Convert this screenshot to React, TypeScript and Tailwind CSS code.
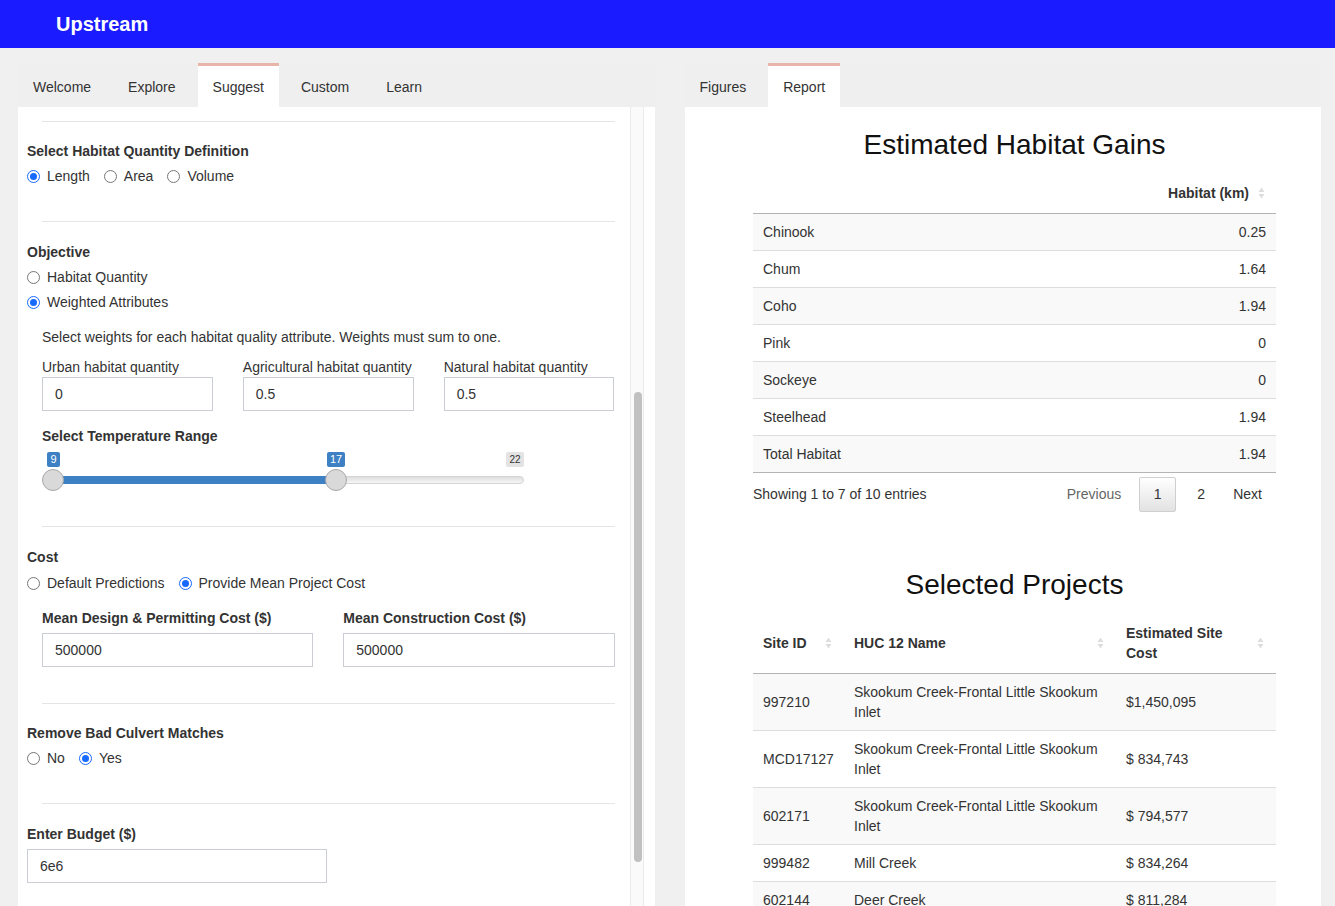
import React from 'react';

const habitatRows = [
  { label: 'Chinook', value: '0.25' },
  { label: 'Chum', value: '1.64' },
  { label: 'Coho', value: '1.94' },
  { label: 'Pink', value: '0' },
  { label: 'Sockeye', value: '0' },
  { label: 'Steelhead', value: '1.94' },
  { label: 'Total Habitat', value: '1.94' },
];

const projects = [
  { id: '997210', name: 'Skookum Creek-Frontal Little Skookum Inlet', cost: '$1,450,095' },
  { id: 'MCD17127', name: 'Skookum Creek-Frontal Little Skookum Inlet', cost: '$ 834,743' },
  { id: '602171', name: 'Skookum Creek-Frontal Little Skookum Inlet', cost: '$ 794,577' },
  { id: '999482', name: 'Mill Creek', cost: '$ 834,264' },
  { id: '602144', name: 'Deer Creek', cost: '$ 811,284' },
];

function Radio({ checked = false }: { checked?: boolean }) {
  if (checked) {
    return (
      <span className="flex h-[13px] w-[13px] shrink-0 items-center justify-center rounded-full border-[1.5px] border-[#1769ff] bg-white">
        <span className="h-[7px] w-[7px] rounded-full bg-[#1769ff]" />
      </span>
    );
  }
  return <span className="h-[13px] w-[13px] shrink-0 rounded-full border border-[#767676] bg-white" />;
}

function RadioOption({ label, checked }: { label: string; checked?: boolean }) {
  return (
    <div className="flex h-[20px] items-center gap-[7px]">
      <Radio checked={checked} />
      <span>{label}</span>
    </div>
  );
}

function Hr({ className }: { className: string }) {
  return <div className={`mx-[15px] border-t border-[#e5e5e5] ${className}`} />;
}

function Label({ children, className }: { children: React.ReactNode; className: string }) {
  return <div className={`font-bold leading-[20px] ${className}`}>{children}</div>;
}

function TextBox({ value, className = '' }: { value: string; className?: string }) {
  return (
    <div className={`flex h-[34px] items-center border border-[#cacdd4] bg-white px-[12px] text-[#333] ${className}`}>
      {value}
    </div>
  );
}

function SortIcon() {
  return (
    <svg width="7" height="14" viewBox="0 0 7 14" className="shrink-0">
      <path d="M0.5 6 L3.5 1.5 L6.5 6 Z" fill="#dedede" />
      <path d="M0.5 8 L3.5 12.5 L6.5 8 Z" fill="#dedede" />
    </svg>
  );
}

function Tab({ label, active }: { label: string; active?: boolean }) {
  return (
    <div
      className={`flex h-[44px] items-center border-t-[3px] px-[15px] pt-[2px] text-[#333] ${
        active ? 'border-[#e8b5a8] bg-white' : 'border-transparent'
      }`}
    >
      {label}
    </div>
  );
}

function TempSlider() {
  return (
    <div className="relative h-[50px] w-[482px]">
      <div className="absolute left-[4px] top-[30px] h-[8px] w-[478px] rounded-full border border-[#d4d4d4] bg-gradient-to-b from-[#dedede] to-[#f6f6f6]" />
      <div className="absolute left-[11px] top-[30px] h-[8px] w-[283px] bg-[#3d80c3]" />
      <div className="absolute left-[0px] top-[23px] h-[22px] w-[22px] rounded-full border border-[#a9a9a9] bg-[#d9d9d9]" />
      <div className="absolute left-[283px] top-[23px] h-[22px] w-[22px] rounded-full border border-[#a9a9a9] bg-[#d9d9d9]" />
      <div className="absolute left-[5px] top-[6px] flex h-[15px] w-[13px] items-center justify-center rounded-[2px] bg-[#3d80c3] text-[11px] text-white">
        9
      </div>
      <div className="absolute left-[285px] top-[6px] flex h-[15px] w-[18px] items-center justify-center rounded-[2px] bg-[#3d80c3] text-[11px] text-white">
        17
      </div>
      <div className="absolute left-[464px] top-[6px] flex h-[15px] w-[18px] items-center justify-center rounded-[2px] bg-[#e3e3e3] text-[10px] text-[#333]">
        22
      </div>
    </div>
  );
}

function LeftPanel() {
  return (
    <div className="flex flex-col">
      <div className="flex h-[44px] gap-[7px] rounded-t-[4px] bg-[#efefef]">
        <Tab label="Welcome" />
        <Tab label="Explore" />
        <Tab label="Suggest" active />
        <Tab label="Custom" />
        <Tab label="Learn" />
      </div>
      <div className="flex h-[799px] bg-white">
        <div className="h-full flex-1 overflow-hidden pl-[9px]">
          <Hr className="mt-[14px]" />
          <Label className="mt-[19px]">Select Habitat Quantity Definition</Label>
          <div className="mt-[5px] flex gap-[14px]">
            <RadioOption label="Length" checked />
            <RadioOption label="Area" />
            <RadioOption label="Volume" />
          </div>
          <Hr className="mt-[35px]" />
          <Label className="mt-[20px]">Objective</Label>
          <div className="mt-[5px]">
            <RadioOption label="Habitat Quantity" />
          </div>
          <div className="mt-[5px]">
            <RadioOption label="Weighted Attributes" checked />
          </div>
          <div className="px-[15px]">
            <p className="mt-[15px] leading-[20px]">Select weights for each habitat quality attribute. Weights must sum to one.</p>
            <div className="mt-[10px] grid grid-cols-3 gap-[30px]">
              <div>
                <div className="leading-[20px]">Urban habitat quantity</div>
                <TextBox value="0" />
              </div>
              <div>
                <div className="leading-[20px]">Agricultural habitat quantity</div>
                <TextBox value="0.5" />
              </div>
              <div>
                <div className="leading-[20px]">Natural habitat quantity</div>
                <TextBox value="0.5" />
              </div>
            </div>
            <Label className="mt-[15px]">Select Temperature Range</Label>
            <TempSlider />
          </div>
          <Hr className="mt-[30px]" />
          <Label className="mt-[20px]">Cost</Label>
          <div className="mt-[6px] flex gap-[14px]">
            <RadioOption label="Default Predictions" />
            <RadioOption label="Provide Mean Project Cost" checked />
          </div>
          <div className="mt-[15px] grid grid-cols-2 gap-[30px] px-[15px]">
            <div>
              <div className="font-bold leading-[20px]">Mean Design &amp; Permitting Cost ($)</div>
              <TextBox value="500000" className="mt-[5px]" />
            </div>
            <div>
              <div className="font-bold leading-[20px]">Mean Construction Cost ($)</div>
              <TextBox value="500000" className="mt-[5px]" />
            </div>
          </div>
          <Hr className="mt-[36px]" />
          <Label className="mt-[19px]">Remove Bad Culvert Matches</Label>
          <div className="mt-[5px] flex gap-[14px]">
            <RadioOption label="No" />
            <RadioOption label="Yes" checked />
          </div>
          <Hr className="mt-[35px]" />
          <Label className="mt-[20px]">Enter Budget ($)</Label>
          <TextBox value="6e6" className="mt-[5px] w-[300px]" />
        </div>
        <div className="h-full w-[14px] border-x border-[#ebebeb] bg-[#fafafa] px-[3px] pt-[285px]">
          <div className="h-[470px] w-[8px] rounded-full bg-[#c1c1c1]" />
        </div>
        <div className="w-[11px]" />
      </div>
    </div>
  );
}

function RightPanel() {
  return (
    <div className="flex flex-col">
      <div className="flex h-[44px] gap-[7px] rounded-t-[4px] bg-[#efefef]">
        <Tab label="Figures" />
        <Tab label="Report" active />
      </div>
      <div className="h-[799px] overflow-hidden bg-white pl-[68.5px] pr-[45px] pt-[20px] text-[#333]">
        <h2 className="text-center text-[28px] leading-[36px] text-[#111]">Estimated Habitat Gains</h2>
        <table className="mt-[10px] w-full border-collapse">
          <thead>
            <tr>
              <th className="border-b border-[#b4b4b4] px-[10px] py-[10px]" />
              <th className="border-b border-[#b4b4b4] py-[10px] pl-[10px] pr-[11px]">
                <div className="flex items-center justify-end gap-[9px] font-bold leading-[20px]">
                  <span>Habitat (km)</span>
                  <SortIcon />
                </div>
              </th>
            </tr>
          </thead>
          <tbody>
            {habitatRows.map((row, i) => (
              <tr key={row.label} className={i % 2 === 0 ? 'bg-[#f9f9f9]' : 'bg-white'}>
                <td
                  className={`border-t border-[#dddddd] px-[10px] py-[8px] text-left leading-[20px] ${
                    i === habitatRows.length - 1 ? 'border-b border-b-[#b4b4b4]' : ''
                  }`}
                >
                  {row.label}
                </td>
                <td
                  className={`border-t border-[#dddddd] px-[10px] py-[8px] text-right leading-[20px] ${
                    i === habitatRows.length - 1 ? 'border-b border-b-[#b4b4b4]' : ''
                  }`}
                >
                  {row.value}
                </td>
              </tr>
            ))}
          </tbody>
        </table>
        <div className="mt-[4px] flex h-[35px] items-center justify-between">
          <span>Showing 1 to 7 of 10 entries</span>
          <div className="flex h-[35px] items-center">
            <span className="px-[14px] text-[#666]">Previous</span>
            <span className="ml-[4px] flex h-[35px] w-[37px] items-center justify-center rounded-[2px] border border-[#cfcfcf] bg-gradient-to-b from-white to-[#e2e2e2]">
              1
            </span>
            <span className="ml-[7px] flex w-[36px] justify-center">2</span>
            <span className="px-[14px]">Next</span>
          </div>
        </div>
        <h2 className="mt-[55px] text-center text-[28px] leading-[36px] text-[#111]">Selected Projects</h2>
        <table className="mt-[10px] w-full table-fixed border-collapse">
          <colgroup>
            <col className="w-[91px]" />
            <col className="w-[272px]" />
            <col className="w-[160px]" />
          </colgroup>
          <thead>
            <tr>
              {['Site ID', 'HUC 12 Name', 'Estimated Site Cost'].map((h) => (
                <th key={h} className="border-b border-[#b4b4b4] py-[10px] pl-[10px] pr-[12px] text-left align-middle">
                  <div className="flex items-center justify-between gap-[4px] font-bold leading-[20px]">
                    <span className={h === 'Estimated Site Cost' ? 'w-[110px]' : ''}>{h}</span>
                    <SortIcon />
                  </div>
                </th>
              ))}
            </tr>
          </thead>
          <tbody>
            {projects.map((p, i) => (
              <tr key={p.id} className={i % 2 === 0 ? 'bg-[#f9f9f9]' : 'bg-white'}>
                <td className="border-t border-[#dddddd] px-[10px] py-[8px] leading-[20px]">{p.id}</td>
                <td className="border-t border-[#dddddd] px-[10px] py-[8px] leading-[20px]">{p.name}</td>
                <td className="border-t border-[#dddddd] px-[10px] py-[8px] leading-[20px]">{p.cost}</td>
              </tr>
            ))}
          </tbody>
        </table>
      </div>
    </div>
  );
}

export default function App() {
  return (
    <div className="h-[906px] overflow-hidden bg-[#f0f0f0] font-['Liberation_Sans',Arial,sans-serif] text-[14px] text-[#333]">
      <header className="flex h-[48px] items-center bg-[#1b1bff] pl-[56px] text-[20px] font-bold text-white">Upstream</header>
      <main className="grid grid-cols-2 gap-[30px] pl-[18px] pr-[14px] pt-[15px]">
        <LeftPanel />
        <RightPanel />
      </main>
    </div>
  );
}
